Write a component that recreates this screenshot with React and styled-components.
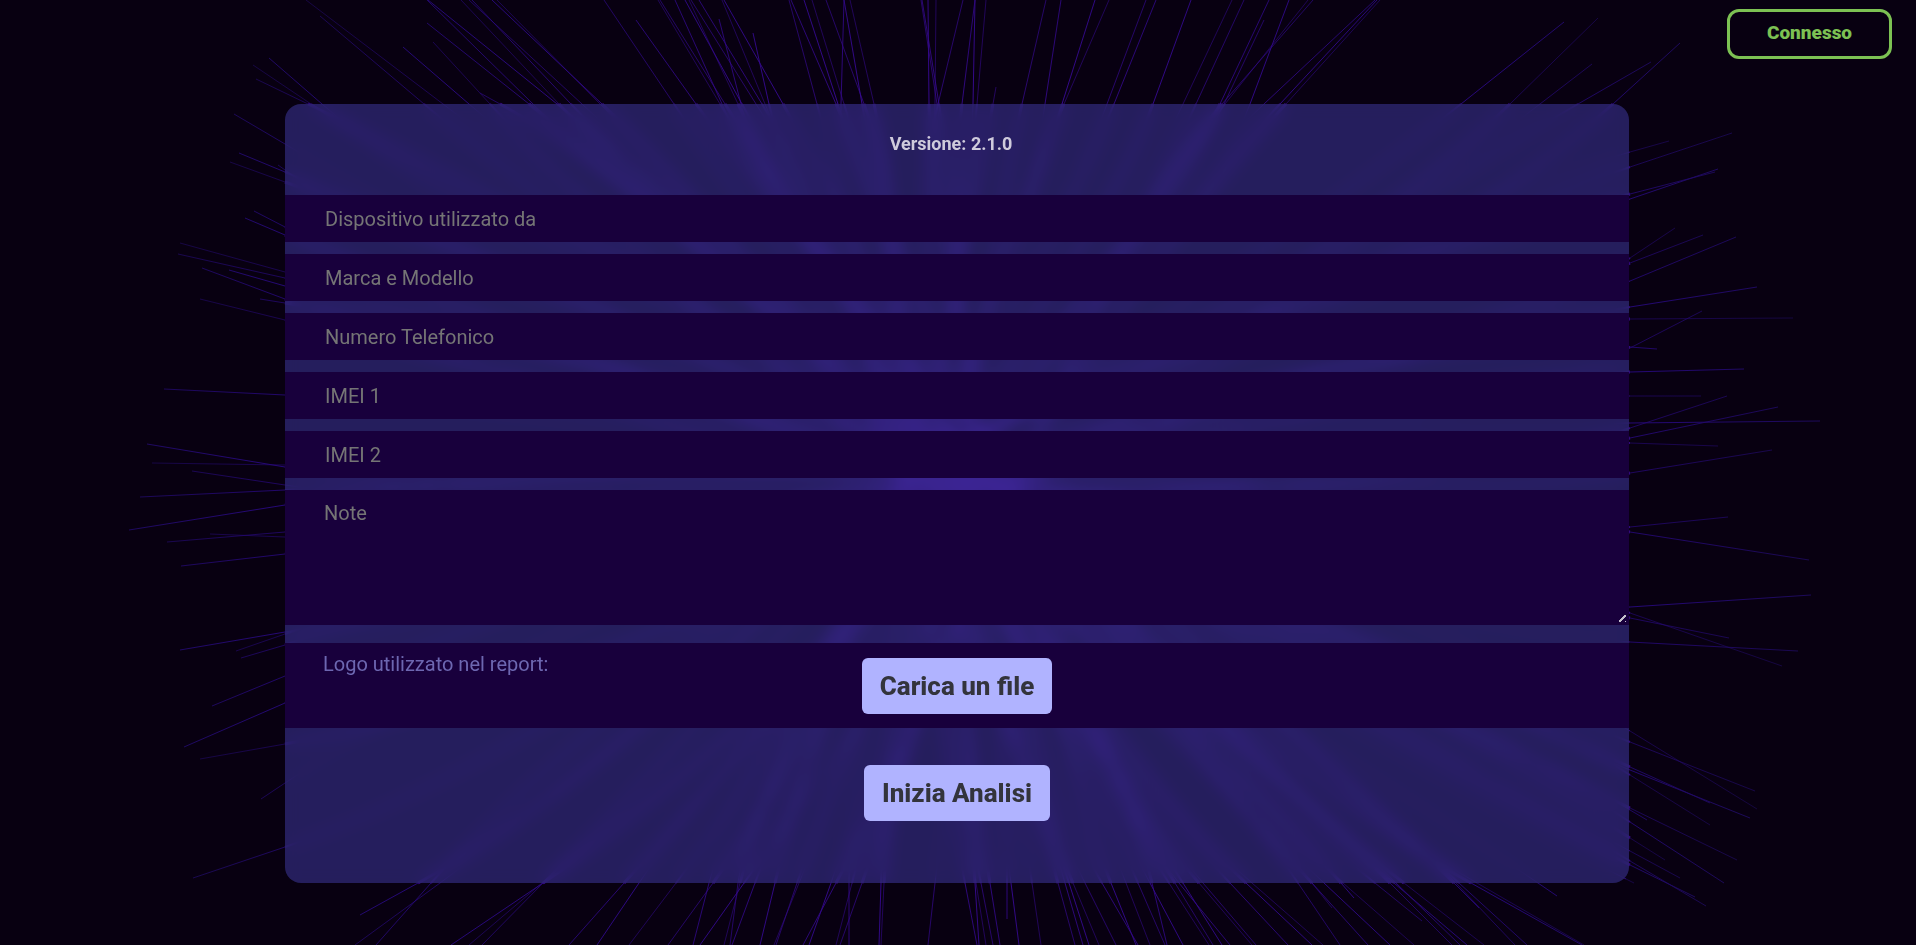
import React from "react";
import styled, { createGlobalStyle } from "styled-components";

const GlobalStyle = createGlobalStyle`
  *, *::before, *::after { box-sizing: border-box; }
  body {
    margin: 0;
    background: #080011;
    font-family: Roboto, "Liberation Sans", sans-serif;
  }
`;

const Page = styled.div`
  position: relative;
  min-height: 100vh;
  overflow: hidden;
`;

const Backdrop = styled.svg`
  position: absolute;
  inset: 0;
  width: 100%;
  height: 100%;
`;

const Header = styled.header`
  position: relative;
  display: flex;
  justify-content: flex-end;
  padding: 9px 24px 0;
`;

const StatusButton = styled.button`
  width: 165px;
  height: 50px;
  padding: 0 0 2px;
  border: 3px solid #7cc153;
  border-radius: 12px;
  background: transparent;
  color: #7cc153;
  font: 900 19px/24px Roboto, sans-serif;
`;

const Card = styled.form`
  position: relative;
  margin: 45px 287px 62px 285px;
  padding-bottom: 62px;
  border-radius: 16px;
  background: rgba(50, 43, 125, 0.7);
  backdrop-filter: blur(8px);
`;

const Version = styled.p`
  margin: 0;
  padding: 28px 12px 39px 0;
  color: #cfcbdc;
  font-size: 18px;
  font-weight: 700;
  line-height: 24px;
  text-align: center;
`;

const Fields = styled.div`
  display: flex;
  flex-direction: column;
  gap: 12px;
`;

const fieldColors = `
  display: block;
  width: 100%;
  border: 0;
  outline: 0;
  background: #18003c;
  color: #b0b3ff;
  font: 400 20px/24px Roboto, sans-serif;
  &::placeholder { color: #757575; opacity: 1; }
`;

const TextField = styled.input`
  ${fieldColors}
  height: 47px;
  padding: 0 40px;
`;

const NoteField = styled.textarea`
  ${fieldColors}
  height: 135px;
  padding: 11px 39px;
  resize: vertical;

  &::-webkit-resizer {
    background:
      linear-gradient(135deg, transparent 42%, #c4c0cc 42% 58%, transparent 58%) 5px 5px / 7px 7px no-repeat,
      linear-gradient(#c4c0cc, #c4c0cc) 11px 11px / 1px 1px no-repeat;
  }
`;

const LogoRow = styled.div`
  display: grid;
  grid-template-columns: 1fr auto 1fr;
  margin-top: 18px;
  padding: 15px 38px 14px;
  background: #18003c;
`;

const LogoLabel = styled.span`
  margin-top: -6px;
  color: #6d67b1;
  font-size: 20px;
  line-height: 24px;
`;

const ActionButton = styled.button`
  height: 56px;
  padding: 0 18px;
  border: 0;
  border-radius: 6px;
  background: #b0b3ff;
  color: #33343c;
  font: 800 26px/32px Roboto, sans-serif;
`;

const Actions = styled.div`
  display: flex;
  justify-content: center;
  padding-top: 37px;
`;

const FIELDS = [
  "Dispositivo utilizzato da",
  "Marca e Modello",
  "Numero Telefonico",
  "IMEI 1",
  "IMEI 2",
];

// Each ray: outer tip x, y, then a second point nearer the centre.
const SIDE_RAYS = [
  [306,0,443,104],[320,16,424,104],[427,23,529,104],[403,47,469,104],[433,42,490,104],
  [480,93,500,104],[427,0,533,104],[428,0,557,104],[461,0,559,104],[469,0,582,104],
  [472,0,571,104],[492,0,602,104],[497,0,600,104],[604,0,674,104],[636,20,696,104],
  [269,58,322,104],[253,65,311,104],[256,79,308,104],[234,114,285,144],[239,153,285,172],
  [230,162,285,182],[278,165,285,170],[254,211,285,227],[245,218,285,235],[180,243,285,272],
  [178,254,285,278],[202,268,285,299],[229,270,285,286],[200,299,285,320],[260,299,285,303],
  [164,389,285,395],[147,444,285,467],[152,463,285,465],[192,471,285,485],[140,497,285,490],
  [129,530,285,505],[210,534,285,537],[167,542,285,532],[181,566,285,554],[180,650,285,632],
  [236,651,285,634],[241,658,285,645],[212,706,285,676],[184,747,285,703],[200,759,285,744],
  [261,799,285,783],[193,878,285,847],[360,915,418,883],
  [1757,809,1630,731],[1755,791,1630,742],[1710,803,1630,767],[1750,818,1630,770],
  [1710,825,1630,775],[1737,860,1630,808],[1647,820,1630,810],[1724,883,1630,822],
  [1665,860,1630,838],[1680,878,1630,851],[1706,906,1630,861],[1695,897,1630,865],
  [1634,883,1626,879],[1728,517,1630,527],[1809,560,1630,532],[1811,595,1630,607],
  [1782,666,1630,613],[1729,638,1630,618],[1798,651,1630,642],
  [1564,22,1461,104],[1598,18,1510,104],[1592,64,1540,104],[1651,62,1578,104],
  [1680,43,1613,104],[1669,141,1630,152],[1732,133,1630,167],[1715,172,1630,194],
  [1718,169,1630,199],[1675,228,1630,258],[1703,235,1630,263],[1736,237,1630,281],
  [1757,287,1630,307],[1793,318,1630,319],[1702,311,1630,348],[1657,349,1630,347],
  [1744,369,1630,372],[1701,396,1630,396],[1727,396,1630,428],[1778,407,1630,438],
  [1820,421,1630,423],[1718,446,1630,443],[1772,450,1630,473],
  [719,19,741,104],[753,33,769,104],[996,87,993,104],[1264,20,1224,104],
  [1007,919,1007,883],[1354,898,1341,883],[1332,908,1312,883],[1422,921,1375,883],
  [1479,908,1454,883],[1557,896,1538,883],
];

const TOP_RAYS = [
  [658,720],[660,725],[675,722],[685,742],[689,738],[691,756],[699,762],[724,783],[722,765],
  [789,817],[791,836],[804,838],[812,844],[826,864],[844,841],[844,862],[850,874],[921,937],
  [922,939],[928,929],[936,935],[963,938],[975,962],[975,973],[986,977],[1046,1022],
  [1061,1045],[1095,1062],[1109,1064],[1146,1107],[1156,1114],[1191,1153],[1232,1183],
  [1244,1196],[1269,1220],[1289,1250],[1308,1225],[1313,1222],[1375,1264],[1377,1280],
  [1380,1286],
];

const BOTTOM_RAYS = [
  [355,440],[376,431],[451,543],[469,542],[482,543],[569,624],[597,639],[629,676],[668,713],
  [693,709],[700,744],[724,740],[730,738],[732,755],[760,775],[774,799],[776,797],[803,836],
  [809,831],[836,852],[840,862],[849,849],[879,881],[881,884],[928,935],[977,965],[979,975],
  [986,976],[993,981],[1000,990],[1019,1011],[1041,1032],[1075,1058],[1083,1065],[1089,1069],
  [1099,1073],[1116,1085],[1138,1102],[1136,1111],[1150,1126],[1165,1138],[1167,1152],
  [1183,1150],[1209,1169],[1213,1175],[1230,1179],[1222,1183],[1252,1199],[1256,1203],
  [1288,1230],[1312,1246],[1323,1252],[1340,1298],[1368,1312],[1390,1324],[1414,1343],
  [1452,1390],[1460,1396],[1467,1394],[1484,1404],[1515,1456],[1527,1459],[1582,1471],
  [1584,1477],
];

const RAYS = [
  ...SIDE_RAYS,
  ...TOP_RAYS.map(([a, b]) => [a, 0, b, 104]),
  ...BOTTOM_RAYS.map(([a, b]) => [a, 945, b, 883]),
];

function innerPath([x1, y1, x2, y2], i) {
  const endX = 955 + ((i * 37) % 130) - 65;
  const endY = 476 + ((i * 23) % 60) - 30;
  const reach = Math.hypot(endX - x2, endY - y2) * 0.35;
  const length = Math.hypot(x2 - x1, y2 - y1) || 1;
  const cx = x2 + ((x2 - x1) / length) * reach;
  const cy = y2 + ((y2 - y1) / length) * reach;
  return `M${x2} ${y2}Q${cx} ${cy} ${endX} ${endY}`;
}

function RayBurst() {
  return (
    <Backdrop viewBox="0 0 1916 945" preserveAspectRatio="xMidYMid slice" aria-hidden="true">
      <defs>
        <radialGradient id="ray" gradientUnits="userSpaceOnUse" cx="955" cy="480" r="860">
          <stop offset="0" stopColor="#5a18d8" />
          <stop offset="0.5" stopColor="#33088a" />
          <stop offset="0.8" stopColor="#26087a" />
          <stop offset="1" stopColor="#1d0a5c" />
        </radialGradient>
        <radialGradient id="core" gradientUnits="userSpaceOnUse" cx="955" cy="480" r="700">
          <stop offset="0" stopColor="#5a18d8" />
          <stop offset="1" stopColor="#3d0c9c" />
        </radialGradient>
      </defs>
      <g fill="none" stroke="url(#ray)" strokeWidth="1">
        {RAYS.map(([x1, y1, x2, y2], i) => (
          <path key={i} d={`M${x1} ${y1}L${x2} ${y2}`} opacity={0.6 + (i % 4) * 0.12} />
        ))}
      </g>
      <g fill="none" stroke="url(#core)">
        {RAYS.map((ray, i) => (
          <path key={i} d={innerPath(ray, i)} strokeWidth={1 + (i % 3)} opacity="0.8" />
        ))}
      </g>
    </Backdrop>
  );
}

export default function App() {
  return (
    <>
      <GlobalStyle />
      <Page>
        <RayBurst />
        <Header>
          <StatusButton type="button">Connesso</StatusButton>
        </Header>
        <Card onSubmit={(event) => event.preventDefault()}>
          <Version>Versione: 2.1.0</Version>
          <Fields>
            {FIELDS.map((name) => (
              <TextField key={name} type="text" placeholder={name} aria-label={name} />
            ))}
            <NoteField placeholder="Note" aria-label="Note" />
          </Fields>
          <LogoRow>
            <LogoLabel id="logo-label">Logo utilizzato nel report:</LogoLabel>
            <ActionButton type="button" aria-describedby="logo-label">Carica un file</ActionButton>
          </LogoRow>
          <Actions>
            <ActionButton type="submit">Inizia Analisi</ActionButton>
          </Actions>
        </Card>
      </Page>
    </>
  );
}
